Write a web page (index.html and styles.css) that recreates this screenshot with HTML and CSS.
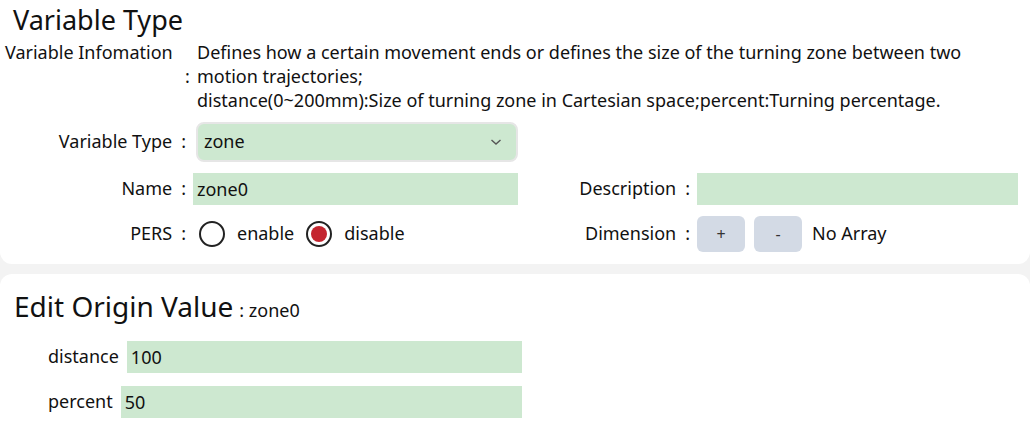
FILE: index.html
```html
<!DOCTYPE html>
<html lang="en">
<head>
	<meta charset="utf-8">
	<title>Variable Type</title>
	<link rel="stylesheet" href="styles.css">
</head>
<body>
<section class="card card-top">
	<h2 class="title">Variable Type</h2>
	<div class="info">
		<span class="info-label">Variable Infomation</span>
		<span class="info-colon">:</span>
		<p class="info-text">Defines how a certain movement ends or defines the size of the turning zone between two motion trajectories;<br>distance(0~200mm):Size of turning zone in Cartesian space;percent:Turning percentage.</p>
	</div>

	<form class="grid">
		<label class="lbl">Variable Type<span class="colon">:</span></label>
		<div class="select">
			<span>zone</span>
			<svg width="12" height="8" viewBox="0 0 12 8"><path d="M1.5 2 L6 6 L10.5 2" fill="none" stroke="#555" stroke-width="1.4"/></svg>
		</div>
		<span></span><span></span>

		<label class="lbl">Name<span class="colon">:</span></label>
		<div class="field">zone0</div>
		<label class="lbl">Description<span class="colon">:</span></label>
		<div class="field"></div>

		<label class="lbl">PERS<span class="colon">:</span></label>
		<div class="radios">
			<span class="radio"></span><span class="radio-text">enable</span>
			<span class="radio checked"></span><span class="radio-text">disable</span>
		</div>
		<label class="lbl">Dimension<span class="colon">:</span></label>
		<div class="dims">
			<button type="button" class="dim-btn">+</button>
			<button type="button" class="dim-btn">-</button>
			<span class="dim-text">No Array</span>
		</div>
	</form>
</section>

<section class="card card-bottom">
	<h2 class="title title-edit">Edit Origin Value<span class="sub">: zone0</span></h2>
	<div class="values">
		<div class="value-row">
			<span class="value-lbl">distance</span>
			<div class="field">100</div>
		</div>
		<div class="value-row">
			<span class="value-lbl">percent</span>
			<div class="field">50</div>
		</div>
	</div>
</section>
</body>
</html>
```

FILE: styles.css
```css
body{
	margin: 0;
	background: #f3f3f3;
	font: 18px / 1.4 "Noto Sans", sans-serif;
	color: #111;
}
.card{
	background: #fff;
}
.card-top{
	border-radius: 0 0 12px 12px;
	padding: 2px 0 12px 0;
	box-sizing: border-box;
	height: 264px;
}
.card-bottom{
	margin-top: 10px;
	border-radius: 12px 12px 0 0;
	height: 164px;
	padding-top: 14px;
	box-sizing: border-box;
}
.title{
	font-size: 27px;
	font-weight: normal;
	margin: 0 0 0 13px;
	line-height: 36px;
}
.title-edit{
	font-size: 28px;
	margin-left: 14px;
}
.sub{
	font-size: 18px;
	margin-left: 6px;
}
.info{
	display: grid;
	grid-template-columns: 180px 12px 1fr;
	padding-left: 5px;
	line-height: 24px;
	margin-top: 2px;
}
.info-label{
	align-self: start;
}
.info-colon{
	align-self: center;
}
.info-text{
	margin: 0;
	padding-right: 40px;
}
.grid{
	display: grid;
	grid-template-columns: 193px 325px 179px 321px;
	grid-template-rows: 40px 32px 36px;
	row-gap: 11px;
	align-items: center;
	margin-top: 10px;
}
.lbl{
	text-align: right;
}
.colon{
	margin: 0 7px 0 9px;
}
.select{
	margin-left: 3px;
	height: 40px;
	box-sizing: border-box;
	border: 2px solid #e6e6e6;
	border-radius: 8px;
	background: #cde8d0;
	display: flex;
	align-items: center;
	justify-content: space-between;
	padding: 0 14px 0 6px;
}
.field{
	height: 32px;
	line-height: 32px;
	background: #cde8d0;
	padding-left: 4px;
}
.radios{
	display: flex;
	align-items: center;
	padding-left: 6px;
}
.radio{
	width: 26px;
	height: 26px;
	box-sizing: border-box;
	border: 2px solid #222;
	border-radius: 50%;
	position: relative;
}
.radio.checked::after{
	content: "";
	position: absolute;
	left: 3px;
	top: 3px;
	width: 16px;
	height: 16px;
	border-radius: 50%;
	background: #c4252f;
}
.radio-text{
	margin: 0 12px 0 12px;
}
.dims{
	display: flex;
	align-items: center;
	height: 36px;
}
.dim-btn{
	width: 48px;
	height: 36px;
	border: 0;
	border-radius: 6px;
	background: #d3dae5;
	color: #333;
	font: 16px "Noto Sans", sans-serif;
	margin-right: 9px;
	padding: 0;
}
.dim-text{
	margin-left: 1px;
}
.values{
	margin-top: 13px;
	padding-left: 48px;
}
.value-row{
	display: flex;
	align-items: center;
	margin-bottom: 13px;
	width: 474px;
}
.value-lbl{
	margin-right: 8px;
}
.value-row .field{
	flex: 1;
}
```
